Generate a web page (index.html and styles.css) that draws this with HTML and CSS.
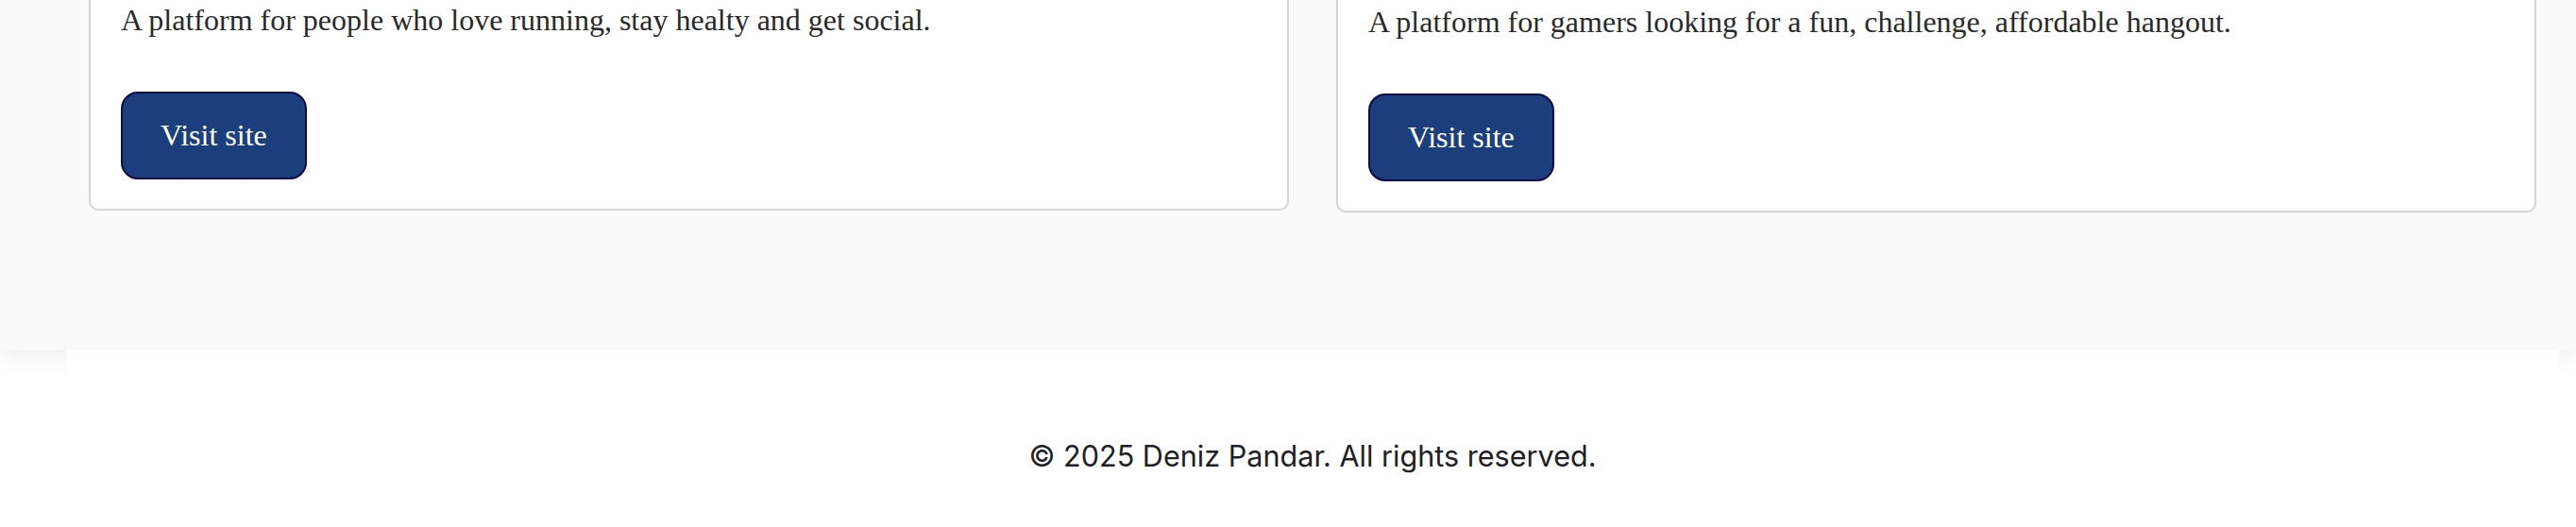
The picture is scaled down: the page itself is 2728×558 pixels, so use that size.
FILE: index.html
```html
<!DOCTYPE html>
<html lang="en">
<head>
<meta charset="utf-8">
<title>Projects</title>
<link rel="stylesheet" href="styles.css">
</head>
<body>
<section class="projects">
  <div class="projects-grid">
    <article class="card">
      <p class="card-text">A platform for people who love running, stay healty and get social.</p>
      <a class="btn" href="#">Visit site</a>
    </article>
    <article class="card card-offset">
      <p class="card-text">A platform for gamers looking for a fun, challenge, affordable hangout.</p>
      <a class="btn" href="#">Visit site</a>
    </article>
  </div>
</section>
<footer class="footer">
  <p class="footer-text">© 2025 Deniz Pandar. All rights reserved.</p>
</footer>
</body>
</html>
```

FILE: styles.css
```css
html, body {
  margin: 0;
  padding: 0;
  background: #ffffff;
}

.projects {
  background: #fafafa;
  box-shadow: 0 6px 26px rgba(0, 0, 0, 0.07);
  padding: 0 18px 146px 70px;
}

.projects-grid {
  display: grid;
  grid-template-columns: 1fr 1fr;
  gap: 50px;
  padding: 0 24px;
  align-items: start;
}

.card {
  background: #ffffff;
  border: 2px solid #d5d5d5;
  border-top: none;
  border-radius: 0 0 10px 10px;
  padding: 3px 32px 31px;
  display: flex;
  flex-direction: column;
  align-items: flex-start;
}

.card-offset {
  padding-top: 5px;
}

.card-text {
  margin: 0 0 57px;
  font-family: "Liberation Serif", "Times New Roman", serif;
  font-size: 32px;
  color: #2a2a2a;
}

.btn {
  display: inline-block;
  font-family: "Liberation Serif", "Times New Roman", serif;
  font-size: 32px;
  color: #ffffff;
  text-decoration: none;
  background: #1b3f7c;
  border: 2px solid #0a0b48;
  border-radius: 18px;
  padding: 26px 40px;
}

.footer {
  position: relative;
  z-index: 1;
  background: #ffffff;
  margin: 0 18px 0 70px;
  height: 190px;
  display: flex;
  justify-content: center;
  align-items: flex-start;
}

.footer-text {
  margin: 93px 0 0;
  font-family: Inter, "Noto Sans", sans-serif;
  font-size: 30.6px;
  color: #1f2023;
}
```
